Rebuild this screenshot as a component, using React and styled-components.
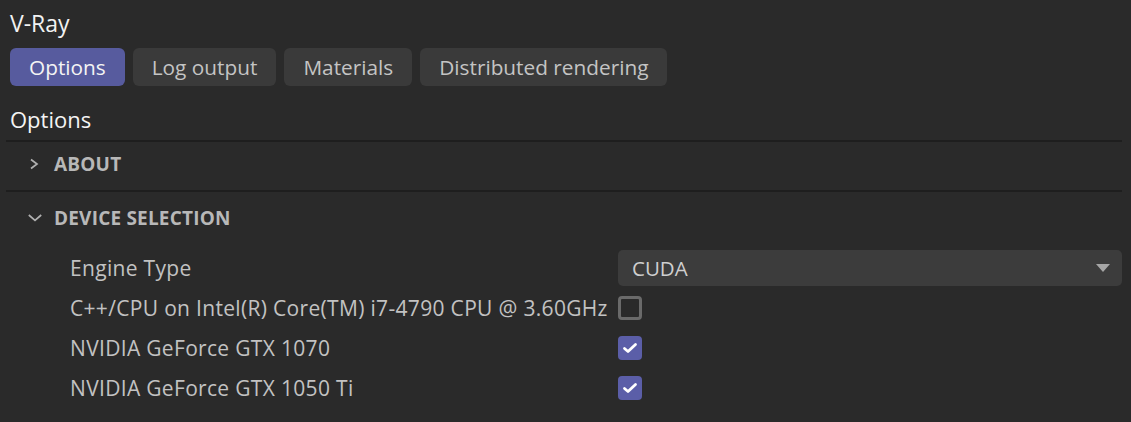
import React from "react";
import styled, { createGlobalStyle } from "styled-components";

const GlobalStyle = createGlobalStyle`
  html, body {
    margin: 0;
    background: #2a2a2a;
  }
  body {
    font-family: "Open Sans", "Noto Sans", sans-serif;
    color: #e6e6e6;
  }
`;

const Panel = styled.div`
  width: 1131px;
  height: 422px;
  box-sizing: border-box;
  padding: 9px 9px 0 6px;
  background: #2a2a2a;
  overflow: hidden;
`;

const Title = styled.div`
  padding-left: 4px;
  font-size: 23px;
  line-height: 28px;
  color: #f2f2f2;
`;

const Tabs = styled.div`
  display: flex;
  gap: 8px;
  margin-top: 11px;
  padding-left: 4px;
`;

const Tab = styled.button`
  height: 38px;
  padding: 0 19px;
  border: none;
  border-radius: 6px;
  font-family: inherit;
  font-size: 20.8px;
  background: ${(p) => (p.$active ? "#575b9e" : "#3a3a3a")};
  color: ${(p) => (p.$active ? "#f4f4f4" : "#c4c4c4")};
`;

const Heading = styled.div`
  margin: 19px 0 7px;
  padding-left: 4px;
  font-size: 22px;
  line-height: 28px;
  color: #f4f4f4;
`;

const Section = styled.div`
  border-top: 2px solid #1e1e1e;
`;

const SectionHeader = styled.div`
  display: flex;
  align-items: center;
  gap: 10px;
  height: ${(p) => p.$h}px;
  box-sizing: border-box;
  padding: 0 0 4px 22px;
  font-size: 19px;
  font-weight: 700;
  letter-spacing: 0.2px;
  color: #b8b8b8;
`;

const Chevron = styled.svg`
  width: 16px;
  height: 16px;
  flex: none;
`;

const Body = styled.div`
  display: grid;
  grid-template-columns: 548px 1fr;
  grid-auto-rows: 40px;
  padding-left: 64px;
`;

const Label = styled.div`
  display: flex;
  align-items: center;
  font-size: 21px;
  letter-spacing: 0.32px;
  color: #c2c2c2;
  white-space: nowrap;
`;

const Cell = styled.div`
  display: flex;
  align-items: center;
`;

const Select = styled.div`
  flex: 1;
  display: flex;
  align-items: center;
  justify-content: space-between;
  height: 36px;
  padding: 0 12px 0 14px;
  border-radius: 5px;
  background: #3c3c3c;
  font-size: 20.5px;
  color: #cfcfcf;
`;

const Caret = styled.span`
  width: 0;
  height: 0;
  border-left: 7px solid transparent;
  border-right: 7px solid transparent;
  border-top: 8px solid #a6a6a6;
`;

const Check = styled.div`
  width: 24px;
  height: 24px;
  box-sizing: border-box;
  border-radius: 4px;
  display: flex;
  align-items: center;
  justify-content: center;
  background: ${(p) => (p.$on ? "#5b5ea8" : "transparent")};
  border: ${(p) => (p.$on ? "none" : "3px solid #6a6a6a")};
`;

const devices = [
  { name: "C++/CPU on Intel(R) Core(TM) i7-4790 CPU @ 3.60GHz", on: false },
  { name: "NVIDIA GeForce GTX 1070", on: true },
  { name: "NVIDIA GeForce GTX 1050 Ti", on: true },
];

export default function App() {
  return (
    <>
      <GlobalStyle />
      <Panel>
        <Title>V-Ray</Title>
        <Tabs>
          <Tab $active>Options</Tab>
          <Tab>Log output</Tab>
          <Tab>Materials</Tab>
          <Tab>Distributed rendering</Tab>
        </Tabs>
        <Heading>Options</Heading>
        <Section>
          <SectionHeader $h={48}>
            <Chevron viewBox="0 0 16 16">
              <path d="M3 3.5 L9 8 L3 12.5" fill="none" stroke="#b0b0b0" strokeWidth="1.7" />
            </Chevron>
            ABOUT
          </SectionHeader>
        </Section>
        <Section>
          <SectionHeader $h={56}>
            <Chevron viewBox="0 0 16 16">
              <path d="M0.8 5 L7 10.3 L13.2 5" fill="none" stroke="#b0b0b0" strokeWidth="1.7" />
            </Chevron>
            DEVICE SELECTION
          </SectionHeader>
          <Body>
            <Label>Engine Type</Label>
            <Cell>
              <Select>
                CUDA
                <Caret />
              </Select>
            </Cell>
            {devices.map((d) => (
              <React.Fragment key={d.name}>
                <Label>{d.name}</Label>
                <Cell>
                  <Check $on={d.on}>
                    {d.on && (
                      <svg width="16" height="12" viewBox="0 0 16 12">
                        <path d="M2.5 6.5 L6 9.5 L13.5 2.5" fill="none" stroke="#fff" strokeWidth="2.8" strokeLinecap="round" strokeLinejoin="round" />
                      </svg>
                    )}
                  </Check>
                </Cell>
              </React.Fragment>
            ))}
          </Body>
        </Section>
      </Panel>
    </>
  );
}
